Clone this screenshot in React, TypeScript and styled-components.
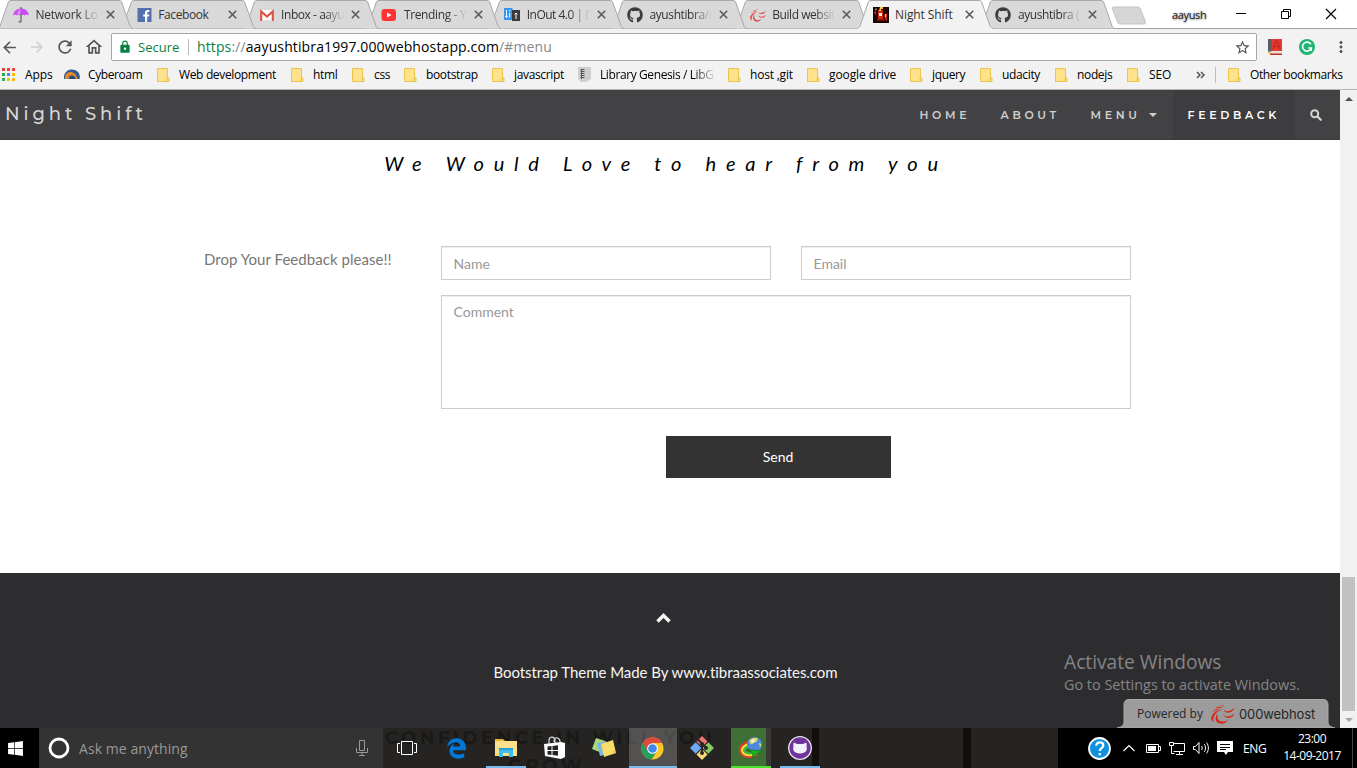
import React from "react";
import styled, { createGlobalStyle } from "styled-components";
import { MdArrowBack, MdArrowForward, MdRefresh, MdOutlineHome, MdLock, MdStarBorder, MdMoreVert } from "react-icons/md";
import { FaEdgeLegacy, FaGithub, FaWindows } from "react-icons/fa6";

const Global = createGlobalStyle`
  * { box-sizing: border-box; }
  body { margin: 0; background: #fff; overflow: hidden; font-family: "Open Sans", sans-serif; }
  svg { display: block; flex: none; }
`;

const Screen = styled.div`
  width: 1357px;
  height: 768px;
  display: flex;
  flex-direction: column;
  overflow: hidden;
`;

/* ---------- browser chrome ---------- */

const TabStrip = styled.div`
  height: 29px;
  flex: none;
  display: flex;
  align-items: flex-start;
  background: #fff;
  box-shadow: inset 0 -1px #a3a3a3;
`;

const TabBox = styled.div<{ $order: number }>`
  position: relative;
  width: 122.8px;
  height: 29px;
  flex: none;
  display: flex;
  align-items: center;
  padding: 0 7px 0 13px;
  z-index: ${(p) => p.$order};
`;

const TabShape = styled.svg`
  position: absolute;
  left: -4px;
  top: 0;
  z-index: -1;
`;

const TabTitle = styled.span<{ $fade: boolean; $ls: number }>`
  width: 63px;
  margin-left: 6.5px;
  overflow: hidden;
  white-space: nowrap;
  font-size: 12px;
  line-height: 18px;
  color: #333;
  letter-spacing: ${(p) => p.$ls}px;
  ${(p) => p.$fade && "mask-image: linear-gradient(90deg, #000 68%, transparent 100%);"}
`;

const CloseGlyph = styled.svg`
  margin-left: 7px;
`;

const NewTab = styled.svg`
  margin: 6px 0 0 6px;
`;

const WindowControls = styled.div`
  margin-left: auto;
  height: 28px;
  display: flex;
  align-items: center;
`;

const UserName = styled.span`
  font-size: 11px;
  color: #222;
  letter-spacing: -0.35px;
  width: 63px;
  text-shadow: 0 0 2px #999, 0 1px 2px #aaa;
`;

const ControlGlyph = styled.svg`
  margin-right: 33px;
  &:last-child { margin-right: 20px; }
`;

const Toolbar = styled.div`
  height: 32px;
  flex: none;
  display: flex;
  align-items: center;
  background: #f2f2f2;
  color: #555;
  padding-top: 4px;
`;

const NavButtons = styled.div`
  width: 111px;
  display: flex;
  gap: 9px;
  align-items: center;
`;

const AddressBar = styled.div`
  width: 1146px;
  height: 28px;
  border: 1px solid #a6a6a6;
  border-radius: 2px;
  background: #fff;
  display: flex;
  align-items: center;
  padding: 0 5px 0 6px;
  font-size: 13px;
`;

const Secure = styled.span`
  color: #0b8043;
  width: 51px;
  margin-left: 6px;
  border-right: 1px solid #bbb;
  line-height: 16px;
`;

const Url = styled.span`
  flex: 1;
  margin-left: 8px;
  color: #000;
  font-size: 14px;
  line-height: 18px;
  letter-spacing: 0.12px;
`;

const UrlPart = styled.span<{ $c: string }>`
  color: ${(p) => p.$c};
`;

const Extensions = styled.div`
  display: flex;
  align-items: center;
  gap: 17px;
  margin-left: 11px;
`;

const BookmarkBar = styled.div`
  height: 29px;
  flex: none;
  display: flex;
  align-items: center;
  background: #f2f2f2;
  border-bottom: 1px solid #b6b4b6;
  padding: 0 0 1px 2px;
`;

const BookmarkItem = styled.div<{ $w: number; $gap: number }>`
  width: ${(p) => p.$w}px;
  flex: none;
  display: flex;
  align-items: center;
  gap: ${(p) => p.$gap}px;
  font-size: 12px;
  color: #000;
  white-space: nowrap;
`;

const BookmarkLabel = styled.span<{ $ls: number; $fade?: boolean }>`
  letter-spacing: ${(p) => p.$ls}px;
  ${(p) => p.$fade && "width: 114px; overflow: hidden; mask-image: linear-gradient(90deg, #000 82%, transparent 102%);"}
`;

const BarRule = styled.div`
  width: 1px;
  height: 16px;
  background: #bdbdbd;
  margin: 0 12px 0 9px;
`;

/* ---------- web page ---------- */

const Viewport = styled.div`
  position: relative;
  height: 638px;
  flex: none;
  display: flex;
`;

const Page = styled.div`
  width: 1340px;
  display: flex;
  flex-direction: column;
  font-family: Lato, sans-serif;
`;

const Navbar = styled.nav`
  height: 50px;
  flex: none;
  display: flex;
  justify-content: space-between;
  background: #424244;
  border-bottom: 1px solid #3b3b3d;
  font-family: Montserrat, Inter, sans-serif;
  color: #d5d5d5;
`;

const Brand = styled.span`
  padding-left: 5px;
  font-size: 18px;
  font-weight: 500;
  line-height: 49px;
  letter-spacing: 3.9px;
`;

const NavLinks = styled.div`
  display: flex;
`;

const NavLink = styled.a<{ $w: number; $active?: boolean }>`
  width: ${(p) => p.$w}px;
  height: 49px;
  display: flex;
  align-items: center;
  padding-left: 14.5px;
  font-size: 11px;
  font-weight: 600;
  letter-spacing: 3.65px;
  color: ${(p) => (p.$active ? "#fff" : "#cfcfcf")};
  background: ${(p) => (p.$active ? "#3d3d3f" : "transparent")};
`;

const Caret = styled.span`
  margin-left: 8.5px;
  border-top: 4px solid currentColor;
  border-left: 4px solid transparent;
  border-right: 4px solid transparent;
`;

const Heading = styled.h4`
  margin: 0;
  padding: 9px 8px 0 0;
  height: 106px;
  text-align: center;
  font-size: 20px;
  line-height: 28px;
  font-weight: 400;
  font-style: italic;
  letter-spacing: 9.78px;
  color: #000;
`;

const FormRow = styled.div`
  display: flex;
  padding-left: 204px;
  flex: 1;
`;

const Prompt = styled.p`
  margin: 0;
  width: 237px;
  font-size: 15px;
  line-height: 27px;
  letter-spacing: 0.04px;
  color: #777;
`;

const Form = styled.div`
  width: 690px;
  display: flex;
  flex-direction: column;
`;

const Fields = styled.div`
  display: flex;
  gap: 30px;
  margin-bottom: 15px;
`;

const Field = styled.div<{ $h: number }>`
  flex: 1;
  height: ${(p) => p.$h}px;
  padding: ${(p) => (p.$h > 40 ? 5 : 6)}px 11.5px;
  border: 1px solid #ccc;
  box-shadow: inset 0 1px 1px rgba(0, 0, 0, 0.075);
  font-size: 14px;
  line-height: 22px;
  color: #999;
`;

const SendButton = styled.button`
  width: 225px;
  height: 42px;
  margin: 12px 0 0 225px;
  padding: 0 1px 2px 0;
  border: 0;
  background: #333;
  color: #fff;
  font: 14px Lato, sans-serif;
`;

const Footer = styled.footer`
  height: 155px;
  flex: none;
  display: flex;
  flex-direction: column;
  align-items: center;
  padding: 40px 9px 0 0;
  background: #2d2d30;
  color: #f5f5f5;
  font-size: 15px;
  letter-spacing: -0.04px;
  gap: 36px;
  line-height: 27px;
`;

const UpIcon = styled.svg`
  margin-right: 4px;
`;

const Scrollbar = styled.div`
  width: 17px;
  display: flex;
  flex-direction: column;
  align-items: center;
  background: #f1f1f1;
  padding: 7px 0 6px;
`;

const ScrollArrow = styled.div<{ $down?: boolean }>`
  border-left: 4px solid transparent;
  border-right: 4px solid transparent;
  ${(p) => (p.$down ? "border-top: 4px solid #a3a3a3;" : "border-bottom: 4px solid #505050;")}
`;

const Thumb = styled.div`
  width: 13px;
  height: 134px;
  margin: auto 0 7px;
  background: #c1c1c1;
`;

const Watermark = styled.div`
  position: absolute;
  left: 1064px;
  top: 559px;
  color: #858587;
  white-space: nowrap;
`;

const WatermarkTitle = styled.div`
  font-size: 19.2px;
  line-height: 26px;
`;

const WatermarkText = styled.div`
  font-size: 14.4px;
  line-height: 20px;
`;

const PoweredBy = styled.div`
  position: absolute;
  left: 1117px;
  top: 609px;
  width: 218px;
  height: 29px;
  display: flex;
  align-items: center;
  padding-left: 20px;
  color: #262628;
  font-size: 12px;
  white-space: nowrap;
  isolation: isolate;
`;

const PoweredShape = styled.svg`
  position: absolute;
  left: 0;
  top: 0;
  z-index: -1;
`;

const PoweredLabel = styled.span`
  width: 74px;
`;

const HostName = styled.span`
  font-family: Inter, sans-serif;
  font-size: 13px;
  letter-spacing: -0.1px;
  margin-left: 4px;
`;

/* ---------- taskbar ---------- */

const Taskbar = styled.div`
  height: 40px;
  flex: none;
  display: flex;
  background: #000;
  color: #fff;
`;

const StartButton = styled.div`
  width: 39px;
  display: flex;
  align-items: center;
  justify-content: center;
  padding-right: 9px;
`;

const SearchBox = styled.div`
  width: 344px;
  display: flex;
  align-items: center;
  background: #333;
  padding: 0 15px 0 9px;
  color: #999;
  font-size: 14px;
`;

const SearchText = styled.span`
  flex: 1;
  margin-left: 9px;
  letter-spacing: 0.07px;
`;

const AppArea = styled.div`
  position: relative;
  width: 675px;
  display: flex;
  overflow: hidden;
  isolation: isolate;
  background: linear-gradient(90deg, transparent 429px, #120e0c 429px 436px, transparent 436px 580px, #120e0c 580px 588px, transparent 588px), #252422;
`;

const Ghost = styled.div<{ $x: number; $y: number }>`
  position: absolute;
  left: ${(p) => p.$x}px;
  top: ${(p) => p.$y}px;
  z-index: -1;
  font: 700 18px/20px Montserrat, Inter, sans-serif;
  letter-spacing: 3.6px;
  white-space: nowrap;
  color: #1a1918;
`;

const slotBackground = (line?: string, bg?: string, wide?: boolean) => {
  const x = wide ? 1 : 5;
  const w = wide ? 48 : 40;
  const layers: string[] = [];
  if (line) layers.push(`linear-gradient(${line}, ${line}) ${x}px 38px / ${w}px 2px no-repeat`);
  if (bg) layers.push(`linear-gradient(90deg, ${bg}) ${x}px 0 / ${w}px 40px no-repeat`);
  return layers.join(", ") || "none";
};

const Slot = styled.div<{ $bg?: string; $line?: string; $wide?: boolean }>`
  width: 49px;
  height: 40px;
  flex: none;
  display: flex;
  align-items: center;
  justify-content: center;
  background: ${(p) => slotBackground(p.$line, p.$bg, p.$wide)};
`;

const Tray = styled.div`
  flex: 1;
  display: flex;
  align-items: center;
  padding-left: 29px;
  font-size: 12px;
`;

const TrayChevron = styled.svg`
  margin-left: 11px;
`;

const Lang = styled.span`
  width: 40px;
  margin-left: 10px;
  letter-spacing: -0.3px;
`;

const Clock = styled.div`
  width: 58px;
  line-height: 17px;
  font-size: 12px;
  letter-spacing: -0.5px;
  white-space: nowrap;
  display: flex;
  flex-direction: column;
  align-items: center;
  padding-bottom: 2px;
`;

const ShowDesktop = styled.div`
  height: 40px;
  margin-left: auto;
  width: 5px;
  border-left: 1px solid #444;
`;

/* ---------- drawings ---------- */

const Umbrella = () => (
  <svg width="16" height="16" viewBox="0 0 16 16">
    <path d="M0 8.5C.6 4 4 1.7 8 1.5s7.5 2.6 8 7c-1.3-1.3-3-1.3-4 0-1-1-2.6-1.2-4 0-1.5-1.2-3-1-4 0-1.2-1.3-3-1.2-4 0z" fill="#c44df0" />
    <path d="M4 8C4 5 6 2.5 8 1.5 7 4 7 6 8 8.5 6.5 7 5 7 4 8z" fill="#e08cff" />
    <path d="M8 0v2M8 7v7c0 1.5-2 1.5-2 0" fill="none" stroke="#666" strokeWidth="1.3" />
  </svg>
);

const FacebookIcon = () => (
  <svg width="16" height="14" viewBox="-1 0 15 14">
    <path fill="#5470ae" d="M0 0h14v14H0z" />
    <path fill="#fff" d="M7.5 14V8.6H5.7V6.5h1.8V5c0-1.9 1.1-2.9 2.8-2.9h1.6v1.9h-1.1c-.9 0-1.1.4-1.1 1.1v1.4h2.1l-.3 2.1H9.7V14z" />
  </svg>
);

const GmailIcon = () => (
  <svg width="16" height="16" viewBox="0 0 16 16">
    <path fill="#fff" d="M1 3h14v11H1z" />
    <path d="M2.2 14V4.5L8 9.5l5.8-5V14" fill="none" stroke="#dd5347" strokeWidth="2.2" />
    <path d="M3.5 13.5h9" stroke="#ddd" />
  </svg>
);

const YoutubeIcon = () => (
  <svg width="16" height="16" viewBox="0 0 16 16">
    <rect y="2" x=".5" width="14.5" height="12" rx="3" fill="#f33" />
    <path fill="#fff" d="M6 5.5v5L10.5 8z" />
  </svg>
);

const InOutIcon = () => (
  <svg width="16" height="16" viewBox="0 0 16 16">
    <path fill="#3697f0" d="M0 1h8.5v12H0z" />
    <path d="M2.5 3v7.5M5.7 3v1.5M5.7 6v4.5M1.3 9l1.2 1.5L3.7 9" stroke="#fff" fill="none" />
    <path fill="#3b3b3b" d="M8 3h8v11H8z" />
    <path d="M12 12V6M10.7 7.5 12 6l1.3 1.5" stroke="#fff" fill="none" />
  </svg>
);

const Swirl = ({ w = 16, h = 14, color = "#e0484d" }: { w?: number; h?: number; color?: string }) => (
  <svg width={w} height={h} viewBox="0 0 24 20" preserveAspectRatio="none">
    <g fill={color}>
      <path d="M7 9c-1.5 3-.5 8 4 8.500 3 .3 5-.8 6.500-2C15 19.500 11 20.500 7.500 19 3.500 17 4 12 7 9z" />
      <path d="M11 9c1.500 4 8 5 12.500.5C22 15 14 16 11 9z" />
      <path d="M12.500 6C15 8 20 7.500 23.500 3.500 22.500 9 15 10.500 12.500 6z" />
      <path d="M0 14C1.500 8.500 6 6 10.500 6 6 7.500 3.500 10 2.500 14c-.4 1.600 0 3 .6 4C1 17 0 16 0 14z" />
      <path d="M.5 8.500c3-3.500 6-4.500 10-3.500C7 5.200 4 6 .5 8.500zM4 4.500C6.500 2.300 9 2.300 12 4.300 9 3.500 7 3.500 4 4.500zM9 1.500c2-.6 4 .2 5 2C12.500 2.200 11 1.700 9 1.500z" />
    </g>
  </svg>
);

const FireIcon = () => (
  <svg width="16" height="16" viewBox="0 0 16 16">
    <path fill="#160302" d="M0 0h16v16H0z" />
    <path fill="#d32a10" d="M5 3h5v9H5zM11 8l3-2v8l-2-2zM1 6l2-3v5z" />
    <path fill="#ffc04a" d="M7 0h3v2H8v2H6zM3 1l1 2H2zM12 7h1v3h-1z" />
    <path fill="#ffe9d8" d="M6 6h3v3H6z" />
    <path fill="#801009" d="M4 12h8v2H4z" />
  </svg>
);

const Octo = () => <FaGithub size={16} color="#3c3c3c" />;

const AppsGrid = () => (
  <svg width="13" height="13" viewBox="0 0 13 13">
    {["#ea4335", "#ea4335", "#ea4335", "#34a853", "#4285f4", "#fbbc05", "#34a853", "#fbbc05", "#fbbc05"].map((c, i) => (
      <rect key={i} x={(i % 3) * 5} y={Math.floor(i / 3) * 5} width="3" height="3" fill={c} />
    ))}
  </svg>
);

const CyberoamIcon = () => (
  <svg width="16" height="16" viewBox="0 0 16 16">
    <path d="M0 12C-.5 6 3 2.5 8 2.5S17 6.5 15.5 12H11c0-2-1-3-3-3S5 10 5 12z" fill="#2e5a97" />
    <path d="M1 12c0-4.5 2-7 5.500-7 3 0 6 2 7 7h-3.500c0-2.500-1-3.500-3-3.500S4.500 10 4.500 12z" fill="#e98a1f" />
    <path d="M5 12c0-4 5-5 6.500-1v1z" fill="#2e4a77" />
  </svg>
);

const FolderIcon = () => (
  <svg width="13" height="14" viewBox="0 0 13 14">
    <path d="M.5.5h10v9.500h1.500v3.500H.5z" fill="#ffe38c" stroke="#e9c54d" />
    <path d="M10 13.500V10h2" fill="none" stroke="#e9c54d" />
  </svg>
);

const BookIcon = () => (
  <svg width="13" height="15" viewBox="0 0 13 15">
    <path d="M0 0h13v12l-5 3H3L0 12z" fill="#cfcfcf" />
    <path d="M2.500 2.500h4M2.500 4.500h4M2.500 6.500h4M2.500 8.500h4M2.500 10.500h4" stroke="#555" />
    <path d="M3.500 2v10" stroke="#555" />
  </svg>
);

const DictionaryIcon = () => (
  <svg width="14" height="16" viewBox="0 0 14 16">
    <path fill="#e5392f" d="M3 0h11v12H3z" />
    <path fill="#5a5e68" d="M0 0h3.500v13H0z" />
    <path fill="#ddd" d="M2 12.500h12v2H2z" />
    <path fill="#c62b23" d="M2 14.500h12V16H2z" />
    <path d="M5 10 8 2h1l3 8M6 7.500h5" fill="none" stroke="#b3261f" strokeWidth="1.2" opacity=".8" />
    <path fill="#f5b92e" d="m0 13 2-1 1 3H1z" />
  </svg>
);

const GrammarlyIcon = () => (
  <svg width="16" height="16" viewBox="0 0 16 16">
    <circle cx="8" cy="8" r="8" fill="#20b573" />
    <path d="M11.800 5.200A4.500 4.500 0 1 0 12.300 9H9.300M12.300 9v3" fill="none" stroke="#fff" strokeWidth="1.6" />
  </svg>
);

const FileExplorer = () => (
  <svg width="22" height="20" viewBox="0 0 22 20">
    <path fill="#e9b43c" d="M0 1h8l2 2h12v4H0z" />
    <path fill="#fce08b" d="M0 3h22v15H0z" />
    <path fill="#3dbdf2" d="M4 10h14v9h-4v-4H8v4H4z" />
    <path fill="#2a9fe0" d="M4 10h14v2H4z" />
  </svg>
);

const StoreIcon = () => (
  <svg width="22" height="24" viewBox="0 0 22 24">
    <path d="M5 8V5c0-5 5-5 6-1v3M10 6c0-6 5-5 6-1v3" fill="none" stroke="#ddd" strokeWidth="1.2" />
    <path fill="#fff" d="m0 8 17-2 4 1v14l-4 2-16-3z" />
    <path fill="#252422" d="m3.500 10.500 4-.5v4h-4zM8.500 10l5.500-.7V14H8.500zM3.500 15h4v4l-4-.5zM8.500 15H14v4.700l-5.500-.7z" />
  </svg>
);

const StickyNotes = () => (
  <svg width="24" height="20" viewBox="0 0 24 20">
    <path fill="#a9d77c" d="m4 0 9 3-3 12L0 11z" />
    <path fill="#7eb5e0" d="m5 5 9-2 3 13-9 2z" />
    <path fill="#f9dd66" d="m9 6 12-4 3 13-12 4z" />
    <path fill="#e9c34c" d="m20 16.500 4-1.500-2-3z" />
  </svg>
);

const ChromeIcon = () => (
  <svg width="23" height="23" viewBox="0 0 24 24">
    <circle cx="12" cy="12" r="11.5" fill="#fbc926" />
    <path d="M2 6.200A11.500 11.500 0 0 0 11 23.500L16.800 14.500 12 12z" fill="#25a05a" />
    <path d="M2 6.200A11.500 11.500 0 0 1 22 6.200H12L7.200 14.500z" fill="#e04a3d" />
    <circle cx="12" cy="12" r="5.6" fill="#fff" />
    <circle cx="12" cy="12" r="4.5" fill="#4486ef" />
  </svg>
);

const GitIcon = () => (
  <svg width="24" height="24" viewBox="0 0 24 24">
    <path fill="#f07474" d="m12 0 5.500 5.500L12 11 6.500 5.500z" />
    <path fill="#6fa8f5" d="m5.700 6.300 5.700 5.700-5.700 5.700L0 12z" />
    <path fill="#83cb62" d="m18.300 6.300 5.700 5.700-5.700 5.700-5.700-5.700z" />
    <path fill="#f8dc7c" d="m12 13 5.500 5.500L12 24l-5.500-5.500z" />
    <path d="m8 3.500 8 8M12 8v9" stroke="#2b2420" strokeWidth="1.8" />
    <g fill="#2b2420"><circle cx="12" cy="8" r="2" /><circle cx="16" cy="12" r="2" /><circle cx="12" cy="17" r="2" /></g>
  </svg>
);

const DownloadManager = () => (
  <svg width="24" height="22" viewBox="0 0 24 22">
    <path d="M10 5C3 6-.5 11 1.500 15.500c3 6 13 5.500 17 1" fill="none" stroke="#e33b25" strokeWidth="2.2" />
    <path d="M10 7.200c-5 1-8 4.500-6.500 7.500 2.500 4.500 10 4.300 13.500 1" fill="none" stroke="#f7e23a" strokeWidth="2.2" />
    <path d="M10 9.400c-3.500.8-5.500 3-4.500 4.800 2 3 7.500 2.800 10 .8" fill="none" stroke="#41b842" strokeWidth="2.2" />
    <circle cx="15.5" cy="7.5" r="7.5" fill="#4c88dd" />
    <path d="M10 4c2-3.500 7-4 9-2.500l-1 3-3 1-2 2-2-1zM20 6l2.500 1-1.500 4z" fill="#d9d06a" />
    <circle cx="14" cy="4" r="2" fill="#fff" opacity=".6" />
    <path d="m9.500 12.500 14.500 2-6 2-4 4.500-1-5.500z" fill="#12b81e" stroke="#0b6d12" strokeWidth=".6" />
  </svg>
);

const GithubDesktop = () => (
  <svg width="24" height="24" viewBox="0 0 24 24">
    <circle cx="12" cy="12" r="11.3" fill="#70359a" stroke="#e9e2ef" strokeWidth="1.3" />
    <path fill="#f4f0f7" d="M6 6.500 9 8h6l3-1.500c.8 2 .8 3 .5 4 1 3-.2 7-6.500 7s-7.500-4-6.500-7c-.3-1-.3-2 .5-4z" />
  </svg>
);

/* ---------- composition ---------- */

const tabs: { title: string; icon: React.ReactNode; active?: boolean; fade?: boolean; ls?: number }[] = [
  { title: "Network Lo", icon: <Umbrella />, fade: true, ls: -0.25 },
  { title: "Facebook", icon: <FacebookIcon />, ls: -0.4 },
  { title: "Inbox - aayu", icon: <GmailIcon />, fade: true, ls: -0.45 },
  { title: "Trending - Y", icon: <YoutubeIcon />, fade: true, ls: -0.35 },
  { title: "InOut 4.0 | D", icon: <InOutIcon />, fade: true, ls: -0.5 },
  { title: "ayushtibra/r", icon: <Octo />, fade: true, ls: -0.4 },
  { title: "Build websit", icon: <Swirl />, fade: true, ls: -0.45 },
  { title: "Night Shift", icon: <FireIcon />, active: true, ls: -0.1 },
  { title: "ayushtibra (", icon: <Octo />, fade: true, ls: -0.4 },
];

const bookmarks: { label: string; w: number; icon?: React.ReactNode; gap?: number; ls?: number; fade?: boolean }[] = [
  { label: "Apps", w: 62, icon: <AppsGrid />, gap: 10 },
  { label: "Cyberoam", w: 93, icon: <CyberoamIcon />, gap: 8, ls: -0.4 },
  { label: "Web development", w: 134, ls: -0.35 },
  { label: "html", w: 61, ls: -0.35 },
  { label: "css", w: 52, ls: -0.3 },
  { label: "bootstrap", w: 88, ls: -0.35 },
  { label: "javascript", w: 86, ls: -0.35 },
  { label: "Library Genesis / LibG", w: 150, icon: <BookIcon />, fade: true, ls: -0.4 },
  { label: "host ,git", w: 79, ls: -0.2 },
  { label: "google drive", w: 103 },
  { label: "jquery", w: 70, ls: -0.35 },
  { label: "udacity", w: 75, ls: -0.35 },
  { label: "nodejs", w: 72, ls: -0.35 },
  { label: "SEO", w: 69 },
];

const TabItem = ({ index, tab }: { index: number; tab: (typeof tabs)[number] }) => (
  <TabBox $order={tab.active ? 20 : 10 - index}>
    <TabShape width="138" height="29" viewBox="0 0 138 29">
      <path
        d="M1 28.500C3 28 3.500 27 4 26L12 3c.6-1.700 1-2.500 3-2.500h108c2 0 2.500 1 3 2.500l8 23c.5 1 1 2 3 2.500"
        fill={tab.active ? "#f2f2f2" : "#d9d9d9"}
        stroke="#a9a9a9"
      />
      {tab.active && <path d="M2 28.500h134" stroke="#f2f2f2" />}
    </TabShape>
    {tab.icon}
    <TabTitle $fade={!!tab.fade} $ls={tab.ls ?? -0.2}>{tab.title}</TabTitle>
    <CloseGlyph width="9" height="9" viewBox="0 0 9 9">
      <path d="m.8.8 7.400 7.400M8.200.8.8 8.200" stroke="#5a5a5a" strokeWidth="1.6" />
    </CloseGlyph>
  </TabBox>
);

export default function App() {
  return (
    <Screen>
      <Global />
      <TabStrip>
        {tabs.map((tab, i) => <TabItem key={i} index={i} tab={tab} />)}
        <NewTab width="36" height="19" viewBox="0 0 36 19">
          <path d="M3 1h23c2 0 3 .5 3.500 2L34.500 16c.3 1.500-.3 2-1.500 2H10c-2 0-3-.5-3.500-2L1.500 3C1 1.500 1.500 1 3 1z" fill="#d6d6d6" stroke="#c4c4c4" />
        </NewTab>
        <WindowControls>
          <UserName>aayush</UserName>
          <ControlGlyph width="12" height="12"><path d="M1 5.500h10" stroke="#000" /></ControlGlyph>
          <ControlGlyph width="12" height="12">
            <path d="M1.500 3.500h7v7h-7zM3.500 3V1.500h7v7H9" fill="none" stroke="#000" />
          </ControlGlyph>
          <ControlGlyph width="12" height="12"><path d="m1 1 10 10M11 1 1 11" stroke="#000" strokeWidth="1.2" /></ControlGlyph>
        </WindowControls>
      </TabStrip>

      <Toolbar>
        <NavButtons>
          <MdArrowBack size={19} />
          <MdArrowForward size={18} color="#cfcfcf" />
          <MdRefresh size={20} />
          <MdOutlineHome size={20} />
        </NavButtons>
        <AddressBar>
          <MdLock size={14} color="#0b8043" />
          <Secure>Secure</Secure>
          <Url>
            <UrlPart $c="#0b8043">https</UrlPart><UrlPart $c="#888">://</UrlPart>aayushtibra1997.000webhostapp.com<UrlPart $c="#888">/#menu</UrlPart>
          </Url>
          <MdStarBorder size={17} />
        </AddressBar>
        <Extensions>
          <DictionaryIcon />
          <GrammarlyIcon />
          <MdMoreVert size={18} />
        </Extensions>
      </Toolbar>

      <BookmarkBar>
        {bookmarks.map((b) => (
          <BookmarkItem key={b.label} $w={b.w} $gap={b.gap ?? 9}>
            {b.icon ?? <FolderIcon />}
            <BookmarkLabel $ls={b.ls ?? -0.1} $fade={b.fade}>{b.label}</BookmarkLabel>
          </BookmarkItem>
        ))}
        <svg width="10" height="8" viewBox="0 0 10 8">
          <path d="m1 1 3 3-3 3M5 1l3 3-3 3" fill="none" stroke="#555" strokeWidth="1.5" />
        </svg>
        <BarRule />
        <BookmarkItem $w={120} $gap={9}>
          <FolderIcon />
          <BookmarkLabel $ls={-0.4}>Other bookmarks</BookmarkLabel>
        </BookmarkItem>
      </BookmarkBar>

      <Viewport>
        <Page>
          <Navbar>
            <Brand>Night Shift</Brand>
            <NavLinks>
              <NavLink $w={81}>HOME</NavLink>
              <NavLink $w={90}>ABOUT</NavLink>
              <NavLink $w={97}>MENU<Caret /></NavLink>
              <NavLink $w={122} $active>FEEDBACK</NavLink>
              <NavLink $w={45}>
                <svg width="12" height="12" viewBox="0 0 12 12">
                  <circle cx="4.7" cy="4.7" r="3.5" fill="none" stroke="#d5d5d5" strokeWidth="2" />
                  <path d="m7.500 7.500 3.200 3.200" stroke="#d5d5d5" strokeWidth="2.3" strokeLinecap="round" />
                </svg>
              </NavLink>
            </NavLinks>
          </Navbar>
          <Heading>We Would Love to hear from you</Heading>
          <FormRow>
            <Prompt>Drop Your Feedback please!!</Prompt>
            <Form>
              <Fields>
                <Field $h={34}>Name</Field>
                <Field $h={34}>Email</Field>
              </Fields>
              <Fields>
                <Field $h={114}>Comment</Field>
              </Fields>
              <SendButton>Send</SendButton>
            </Form>
          </FormRow>
          <Footer>
            <UpIcon width="15" height="10" viewBox="0 0 15 10">
              <path d="m1.500 8.500 6-6 6 6" fill="none" stroke="#f5f5f5" strokeWidth="3.5" />
            </UpIcon>
            <span>Bootstrap Theme Made By www.tibraassociates.com</span>
          </Footer>
        </Page>
        <Scrollbar>
          <ScrollArrow />
          <Thumb />
          <ScrollArrow $down />
        </Scrollbar>
        <Watermark>
          <WatermarkTitle>Activate Windows</WatermarkTitle>
          <WatermarkText>Go to Settings to activate Windows.</WatermarkText>
        </Watermark>
        <PoweredBy>
          <PoweredShape width="218" height="29" viewBox="0 0 218 29">
            <path d="M0 29c5-1 7-3 7-7V6c0-4 2-5.500 5-5.500h194c3 0 5 1.500 5 5.500v16c0 4 2 6 7 7z" fill="#9c9c9c" stroke="#aaa" />
          </PoweredShape>
          <PoweredLabel>Powered by</PoweredLabel>
          <Swirl w={24} h={20} color="#d92a1c" />
          <HostName>000webhost</HostName>
        </PoweredBy>
      </Viewport>

      <Taskbar>
        <StartButton><FaWindows size={17} /></StartButton>
        <SearchBox>
          <svg width="22" height="22" viewBox="0 0 22 22">
            <circle cx="11" cy="11" r="9" fill="none" stroke="#fff" strokeWidth="2.8" />
          </svg>
          <SearchText>Ask me anything</SearchText>
          <svg width="12" height="16" viewBox="0 0 12 16">
            <path d="M3.500.5h5v10h-5zM.5 8v4.500h11V8M6 12.500v3M3 15.500h6" fill="none" stroke="#999" />
          </svg>
        </SearchBox>
        <AppArea>
          <Ghost $x={2} $y={0}>CONFIDENCE IN WILL YOU</Ghost>
          <Ghost $x={125} $y={28}>GROW</Ghost>
          <Slot>
            <svg width="21" height="14" viewBox="0 0 21 14">
              <path d="M4.500.5h11v13h-11zM3 2.500H.5v9H3M17 2.500h2.500v9H17" fill="none" stroke="#fff" />
            </svg>
          </Slot>
          <Slot><FaEdgeLegacy size={21} color="#0078d7" /></Slot>
          <Slot $line="#76b9ed"><FileExplorer /></Slot>
          <Slot><StoreIcon /></Slot>
          <Slot><StickyNotes /></Slot>
          <Slot $bg="rgba(255,255,255,.21), rgba(255,255,255,.21)" $line="#76b9ed" $wide><ChromeIcon /></Slot>
          <Slot><GitIcon /></Slot>
          <Slot $bg="#3f6f35 35px, #3a3938 35px" $line="#4be32b"><DownloadManager /></Slot>
          <Slot $line="#76b9ed"><GithubDesktop /></Slot>
        </AppArea>
        <Tray>
          <svg width="25" height="25" viewBox="0 0 25 25">
            <circle cx="12.5" cy="12.5" r="10.5" fill="#1292dc" stroke="#fff" strokeWidth="1.8" />
            <path d="M9.300 9.800c0-4.800 7-4.300 7-.4 0 2.800-3.600 2.600-3.600 5.600M12.700 17v2.300" fill="none" stroke="#fff" strokeWidth="2.2" />
          </svg>
          <TrayChevron width="12" height="8" viewBox="0 0 12 8">
            <path d="m.5 7 5.500-5.500L11.500 7" fill="none" stroke="#fff" strokeWidth="1.2" />
          </TrayChevron>
          <svg width="98" height="16" viewBox="0 0 98 16" fill="none" stroke="#fff">
            <path d="M11.500 4.500h12v8h-12zM24 6.500h1.500v4H24" />
            <path d="M13 6h8v5h-8z" fill="#fff" stroke="none" />
            <path d="M38.500 3.500h11v8h-11M34.500 2.500h4v3h-4zM36.500 5.500v8h3M41 14.500h7M44.500 12v2" />
            <path d="M58.500 6.500h2l3.500-4v11l-3.500-4h-2zM66.500 6c1 1 1 3 0 4M69 4c2 2 2 6 0 8M71.500 2.500c2.500 3 2.500 8 0 11" />
            <path d="M82 1h16v11h-5l-2 3-2-3h-7z" fill="#fff" stroke="none" />
            <path d="M85 4.500h10M85 7.500h10M85 9.500h6" stroke="#000" />
          </svg>
          <Lang>ENG</Lang>
          <Clock><span>23:00</span><span>14-09-2017</span></Clock>
          <ShowDesktop />
        </Tray>
      </Taskbar>
    </Screen>
  );
}
